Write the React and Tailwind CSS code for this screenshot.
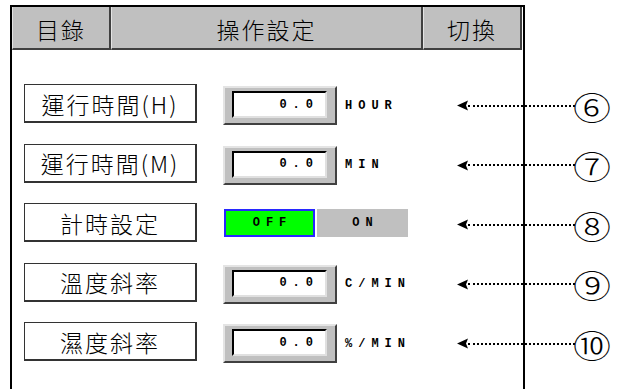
import React from 'react';

const rows = [
  { label: '運行時間(H)', type: 'input', unit: 'HOUR', num: '⑥' },
  { label: '運行時間(M)', type: 'input', unit: 'MIN', num: '⑦' },
  { label: '計時設定', type: 'toggle', num: '⑧' },
  { label: '溫度斜率', type: 'input', unit: 'C/MIN', num: '⑨' },
  { label: '濕度斜率', type: 'input', unit: '%/MIN', num: '⑩' },
];

function HeaderCell({ w, children }) {
  return (
    <div
      className={`${w} flex h-[43px] shrink-0 items-center justify-center border-b-2 border-l border-r-2 border-b-[#404040] border-l-[#e4e4e4] border-r-[#404040] bg-[#c0c0c0] pt-[3px] font-['Noto_Sans_CJK_TC','Noto_Sans_CJK_JP',sans-serif] text-[23px] font-light leading-none tracking-[2px] text-black`}
    >
      {children}
    </div>
  );
}

function ValueBox() {
  return (
    <div className="ml-[26px] mt-[2px] flex h-[39px] w-[114px] shrink-0 border-2 border-b-[#404040] border-l-[#e4e4e4] border-r-[#404040] border-t-[#e4e4e4] bg-[#c0c0c0] pb-[5px] pl-[7px] pr-[8px] pt-[3px]">
      <div className="flex flex-1 items-center justify-end border-2 border-b-[#e0e0e0] border-l-black border-r-[#e0e0e0] border-t-black bg-white pr-[6px] font-['Liberation_Mono',monospace] text-[12px] font-bold leading-none tracking-[6px] text-black">
        0.0
      </div>
    </div>
  );
}

function Toggle() {
  return (
    <div className="ml-[27px] mt-[6px] flex h-[28px] shrink-0 font-['Liberation_Mono',monospace] text-[12px] font-bold leading-none tracking-[6px] text-black">
      <div className="flex w-[91px] items-center justify-center border-2 border-[#2828ff] bg-[#00ff00] pl-[6px]">OFF</div>
      <div className="ml-[2px] flex w-[91px] items-center justify-center bg-[#c0c0c0] pl-[6px]">ON</div>
    </div>
  );
}

function Pointer({ num }) {
  return (
    <div className="mt-[2px] flex h-[39px] shrink-0 items-center">
      <svg width="11" height="11" viewBox="0 0 11 11" className="shrink-0">
        <path d="M0 5.5 L11 0.5 L9 5.5 L11 10.5 Z" fill="black" />
      </svg>
      <div className="w-[107px] shrink-0 border-t-2 border-dotted border-black" />
      <span className="flex w-[34px] shrink-0 scale-y-[0.85] items-center justify-center font-['Noto_Sans_CJK_JP',sans-serif] text-[38px] font-light leading-none text-black">
        {num}
      </span>
    </div>
  );
}

export default function App() {
  return (
    <div className="h-[389px] w-[621px] overflow-hidden bg-white pl-[10px] pt-[5px]">
      <div className="h-[384px] w-[515px] border-2 border-b-0 border-black">
        <div className="flex">
          <HeaderCell w="w-[99px]">目錄</HeaderCell>
          <HeaderCell w="w-[312px]">操作設定</HeaderCell>
          <HeaderCell w="w-[99px]">切換</HeaderCell>
        </div>

        <div className="flex flex-col gap-[18.5px] pl-[12px] pt-[34px]">
          {rows.map((row) => (
            <div key={row.num} className="flex h-[41px] items-start">
              <div className="flex h-[39px] w-[173px] shrink-0 items-center justify-center border border-b-2 border-r-2 border-[#333] pt-[2px] font-['Noto_Sans_CJK_TC','Noto_Sans_CJK_JP',sans-serif] text-[23px] font-light leading-none tracking-[2px] text-black">
                {row.label}
              </div>
              {row.type === 'input' ? (
                <>
                  <ValueBox />
                  <div className="ml-[8px] mt-[2px] flex h-[39px] w-[112px] shrink-0 items-center font-['Liberation_Mono',monospace] text-[12px] font-bold leading-none tracking-[6px] text-black">
                    {row.unit}
                  </div>
                </>
              ) : (
                <>
                  <Toggle />
                  <div className="w-[49px] shrink-0" />
                </>
              )}
              <Pointer num={row.num} />
            </div>
          ))}
        </div>
      </div>
    </div>
  );
}
